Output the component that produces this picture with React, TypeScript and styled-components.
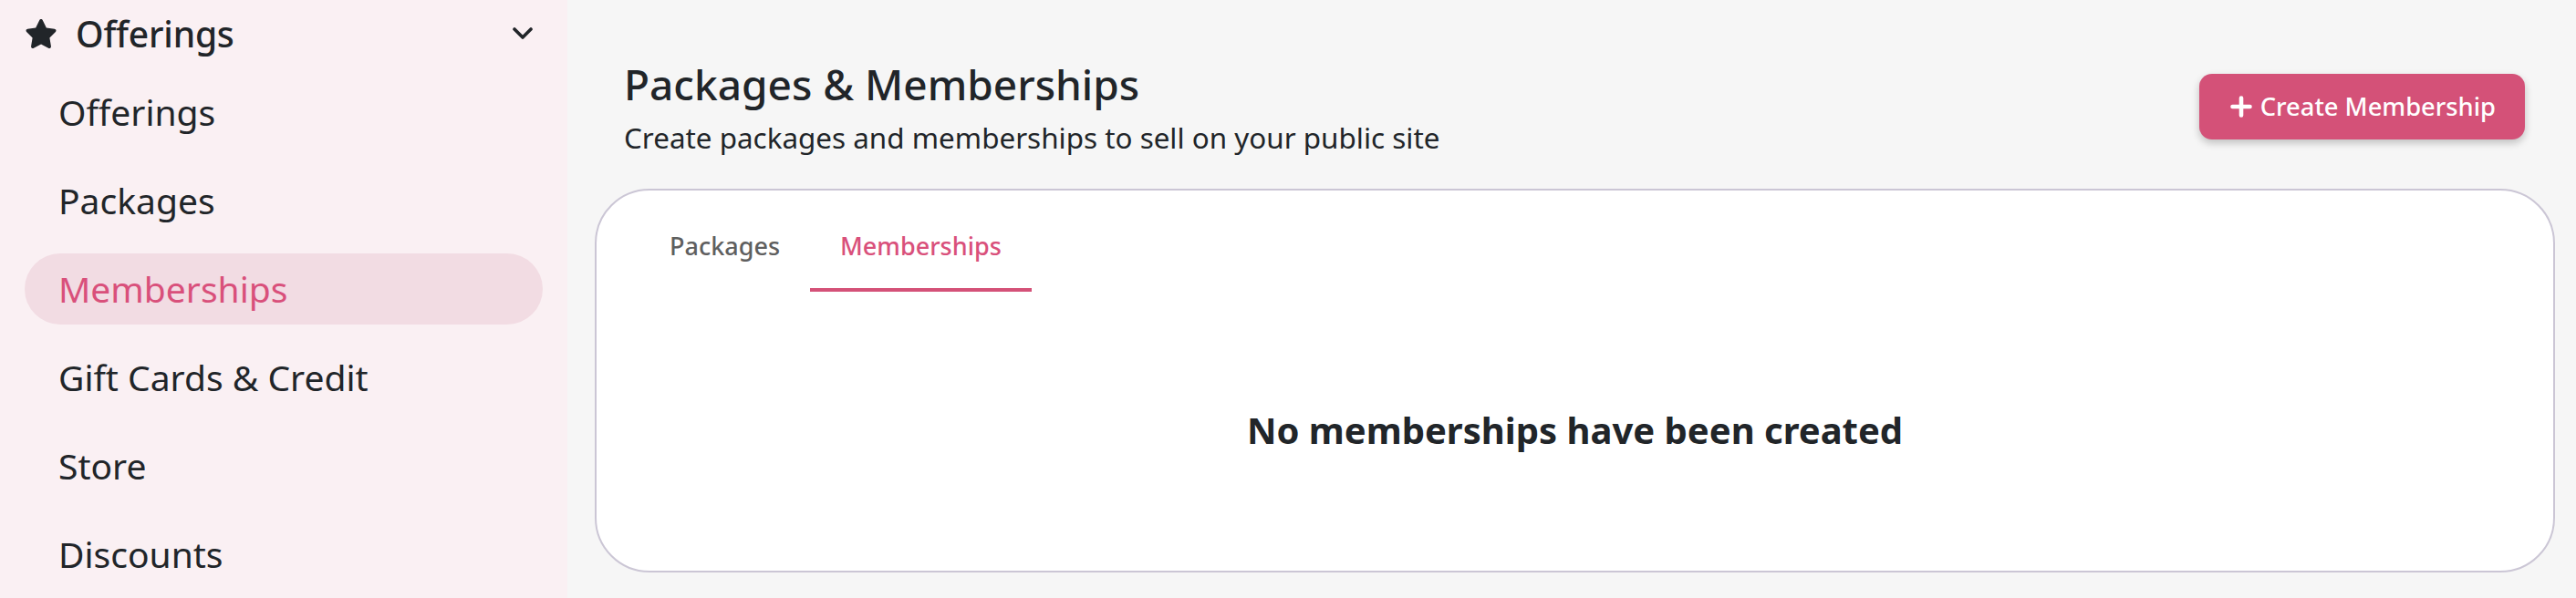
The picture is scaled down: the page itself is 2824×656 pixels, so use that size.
import React from "react";
import styled, { createGlobalStyle } from "styled-components";

const GlobalStyle = createGlobalStyle`
  html, body {
    margin: 0;
    padding: 0;
    background: #f6f6f6;
    font-family: "Noto Sans", "Open Sans", sans-serif;
    color: #212529;
  }
  * { box-sizing: border-box; }
`;

const Page = styled.div`
  display: flex;
  width: 2824px;
  height: 656px;
  overflow: hidden;
  background: #f6f6f6;
`;

const Sidebar = styled.nav`
  width: 622px;
  flex-shrink: 0;
  background: #faf0f3;
  padding: 0 27px;
  display: flex;
  flex-direction: column;
`;

const SectionHeader = styled.div`
  display: flex;
  align-items: center;
  height: 74px;
  padding-right: 11px;
  gap: 20px;
  color: #212529;
`;

const SectionLabel = styled.span`
  flex: 1;
  font-size: 39px;
  font-weight: 500;
  line-height: 54px;
  letter-spacing: -0.2px;
`;

const NavList = styled.div`
  display: flex;
  flex-direction: column;
  gap: 19px;
  margin-top: 10px;
`;

const NavItem = styled.div<{ $active?: boolean }>`
  height: 78px;
  display: flex;
  align-items: center;
  padding-left: 37px;
  border-radius: 39px;
  font-size: 39px;
  font-weight: 400;
  line-height: 54px;
  color: ${(p) => (p.$active ? "#d9507b" : "#212529")};
  background: ${(p) => (p.$active ? "#f2dce3" : "transparent")};
`;

const Main = styled.main`
  flex: 1;
  padding: 0 23px 0 30px;
  display: flex;
  flex-direction: column;
`;

const Header = styled.header`
  display: flex;
  align-items: center;
  justify-content: space-between;
  padding: 61px 33px 0 32px;
  margin-bottom: 35px;
`;

const TitleBlock = styled.div`
  display: flex;
  flex-direction: column;
`;

const Title = styled.h1`
  margin: 0;
  font-size: 46px;
  font-weight: 500;
  line-height: 62px;
  color: #212529;
`;

const Subtitle = styled.p`
  margin: 7px 0 0;
  font-size: 31.4px;
  font-weight: 400;
  line-height: 42px;
  color: #212529;
`;

const PrimaryButton = styled.button`
  height: 72px;
  display: flex;
  align-items: center;
  gap: 9px;
  padding: 0 32px 0 34px;
  border: none;
  border-radius: 14px;
  background: #d45178;
  color: #ffffff;
  font-family: "Noto Sans", sans-serif;
  font-size: 27.3px;
  font-weight: 500;
  box-shadow: 0 4px 8px rgba(0, 0, 0, 0.22);
  cursor: pointer;
`;

const Card = styled.section`
  background: #ffffff;
  border: 2px solid #cbc6d5;
  border-radius: 60px;
  padding: 15px 47px 0;
  display: flex;
  flex-direction: column;
`;

const TabBar = styled.div`
  display: flex;
`;

const Tab = styled.div<{ $active?: boolean }>`
  height: 96px;
  display: flex;
  align-items: center;
  padding: 0 33px;
  font-size: 27px;
  font-weight: 500;
  line-height: 38px;
  color: ${(p) => (p.$active ? "#d9507b" : "#5f5f5f")};
  border-bottom: 4px solid ${(p) => (p.$active ? "#d45178" : "transparent")};
`;

const Empty = styled.div`
  height: 306px;
  padding-bottom: 4px;
  display: flex;
  align-items: center;
  justify-content: center;
  font-size: 40px;
  font-weight: 700;
  color: #212529;
`;

const StarIcon = () => (
  <svg width="36" height="34" viewBox="0 0 576 512" fill="#212529">
    <path d="M316.9 18C311.6 7 300.4 0 288.1 0s-23.4 7-28.8 18L195 150.3 51.4 171.5c-12 1.8-22 10.2-25.7 21.7s-.7 24.2 7.9 32.7L137.8 329 113.2 474.7c-2 12 3 24.2 12.9 31.3s23 8 33.8 2.3l128.3-68.5 128.3 68.5c10.8 5.7 23.9 4.9 33.8-2.3s14.9-19.3 12.9-31.3L438.5 329 542.7 225.9c8.6-8.5 11.7-21.2 7.9-32.7s-13.7-19.9-25.7-21.7L381.2 150.3 316.9 18z" />
  </svg>
);

const ChevronIcon = () => (
  <svg width="22" height="14" viewBox="0 0 22 14" fill="none">
    <path d="M2 2l9 9 9-9" stroke="#212529" strokeWidth="3.6" strokeLinecap="round" strokeLinejoin="round" />
  </svg>
);

const PlusIcon = () => (
  <svg width="24" height="24" viewBox="0 0 24 24" fill="none">
    <path d="M12 2.5v19M2.5 12h19" stroke="#ffffff" strokeWidth="4.6" strokeLinecap="round" />
  </svg>
);

const navItems = ["Offerings", "Packages", "Memberships", "Gift Cards & Credit", "Store", "Discounts"];

export default function App() {
  return (
    <>
      <GlobalStyle />
      <Page>
        <Sidebar>
          <SectionHeader>
            <StarIcon />
            <SectionLabel>Offerings</SectionLabel>
            <ChevronIcon />
          </SectionHeader>
          <NavList>
            {navItems.map((item) => (
              <NavItem key={item} $active={item === "Memberships"}>
                {item}
              </NavItem>
            ))}
          </NavList>
        </Sidebar>
        <Main>
          <Header>
            <TitleBlock>
              <Title>Packages &amp; Memberships</Title>
              <Subtitle>Create packages and memberships to sell on your public site</Subtitle>
            </TitleBlock>
            <PrimaryButton>
              <PlusIcon />
              Create Membership
            </PrimaryButton>
          </Header>
          <Card>
            <TabBar>
              <Tab>Packages</Tab>
              <Tab $active>Memberships</Tab>
            </TabBar>
            <Empty>No memberships have been created</Empty>
          </Card>
        </Main>
      </Page>
    </>
  );
}
